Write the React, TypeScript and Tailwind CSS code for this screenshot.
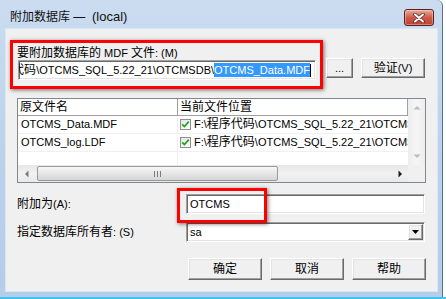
import React from "react";

const CJK = /([\u2e80-\u9fff\uff00-\uffef]+)/;

// CJK runs render at 12px, latin at 11px (like the dialog font)
const Txt = ({ s }: { s: string }) => (
  <>
    {s.split(CJK).map((part, i) =>
      i % 2 === 1 ? (
        <span key={i} className="text-[12px]">
          {part}
        </span>
      ) : (
        <span key={i}>{part}</span>
      )
    )}
  </>
);

const sunken =
  "bg-white border border-t-[#a0a0a0] border-l-[#a0a0a0] border-b-white border-r-white shadow-[inset_1px_1px_0_#696969,inset_-1px_-1px_0_#e3e3e3]";
const raised =
  "bg-[#f0f0f0] border border-t-white border-l-white border-b-[#696969] border-r-[#696969] shadow-[inset_-1px_-1px_0_#a0a0a0,inset_1px_1px_0_#e3e3e3] flex items-center justify-center leading-none";

const CheckBox = () => (
  <div className="w-[11px] h-[11px] shrink-0 border border-[#8e8f8f] bg-gradient-to-br from-[#e6e6e6] to-white flex items-center justify-center">
    <svg width="9" height="9" viewBox="0 0 9 9">
      <path d="M1.2 4.3 L3.4 6.6 L7.8 1.6" fill="none" stroke="#21a121" strokeWidth="1.7" />
    </svg>
  </div>
);

const Arrow = ({ dir, color }: { dir: "up" | "down" | "left" | "right"; color: string }) => {
  const d = {
    up: "M0.5 4.5 L4 1 L7.5 4.5 Z",
    down: "M0.5 1.5 L4 5 L7.5 1.5 Z",
    left: "M4.5 0.5 L1 4 L4.5 7.5 Z",
    right: "M1.5 0.5 L5 4 L1.5 7.5 Z",
  }[dir];
  const vertical = dir === "up" || dir === "down";
  return (
    <svg width={vertical ? 8 : 6} height={vertical ? 6 : 8} viewBox={vertical ? "0 0 8 6" : "0 0 6 8"}>
      <path d={d} fill={color} />
    </svg>
  );
};

const files = [{ name: "OTCMS_Data.MDF" }, { name: "OTCMS_log.LDF" }];

const App = () => {
  return (
    <div className="w-[446px] h-[299px] bg-white overflow-hidden font-['Liberation_Sans','Noto_Sans_CJK_SC',sans-serif] text-[11px] text-black">
      {/* window */}
      <div className="w-[443px] h-[297px] border-r border-[#55708f] rounded-tr-[6px] bg-gradient-to-b from-[#cbdcf0] via-[#bcd2eb] to-[#b5cde8] flex flex-col">
        {/* title bar */}
        <div className="h-[29px] flex items-start shrink-0">
          <div className="pl-[10px] pt-[9px] leading-[16px] text-[12px] text-[#111] flex-1 whitespace-pre">
            附加数据库 —  <span className="text-[13px]">(local)</span>
          </div>
          <div className="mt-[9px] mr-[8px] w-[30px] h-[17px] rounded-[3px] border border-[#5a2020] bg-gradient-to-b from-[#e9a99c] via-[#cf5a49] to-[#c0412f] shadow-[inset_0_0_0_1px_rgba(255,255,255,0.35)] flex items-center justify-center">
            <svg width="12" height="10" viewBox="0 0 12 10">
              <path d="M2 1.5 L10 8.5 M10 1.5 L2 8.5" stroke="#5b2a2a" strokeWidth="3.6" strokeLinecap="round" />
              <path d="M2 1.5 L10 8.5 M10 1.5 L2 8.5" stroke="#ffffff" strokeWidth="2" strokeLinecap="round" />
            </svg>
          </div>
        </div>

        {/* client area */}
        <div className="ml-[6px] w-[431px] h-[262px] bg-[#f0f0f0] shadow-[0_0_0_1px_#d9e6f4] flex flex-col">
          {/* MDF file row */}
          <div className="flex items-start pt-[11px] pl-[4px]">
            <div className="w-[313px] h-[49px] border-[3px] border-[#ff0000] shadow-[1px_1px_4px_rgba(0,0,0,0.55)] pt-[3px] pl-[4px]">
              <div className="h-[14px] leading-[14px] whitespace-nowrap">
                <Txt s="要附加数据库的 MDF 文件: (M)" />
              </div>
              <div className={`${sunken} ml-[1px] w-[298px] h-[20px] flex items-center justify-end overflow-hidden pr-[4px]`}>
                <span className="shrink-0 whitespace-nowrap leading-[14px]">
                  <Txt s="F:\程序代码\OTCMS_SQL_5.22_21\OTCMSDB\" />
                </span>
                <span className="shrink-0 whitespace-nowrap leading-[14px] bg-[#3399ff] text-white">OTCMS_Data.MDF</span>
                <span className="shrink-0 w-px h-[13px] bg-black" />
              </div>
            </div>
            <button className={`${raised} mt-[18px] ml-[3px] w-[27px] h-[20px]`}>...</button>
            <button className={`${raised} mt-[18px] ml-[8px] w-[64px] h-[20px]`}>
              <Txt s="验证(V)" />
            </button>
          </div>

          {/* file list */}
          <div className="mt-[9px] ml-[11px] w-[409px] h-[85px] border border-[#828790] bg-white flex">
            <div className="w-[390px] flex flex-col">
              <div className="h-[17px] flex border-b border-[#a0a0a0] leading-[16px]">
                <div className="w-[160px] border-r border-[#a0a0a0] pl-[2px]">
                  <Txt s="原文件名" />
                </div>
                <div className="w-[230px] border-r border-[#a0a0a0] pl-[2px] whitespace-nowrap">
                  <Txt s="当前文件位置" />
                </div>
              </div>
              {files.map((f) => (
                <div key={f.name} className="h-[18px] flex border-b border-[#f0f0f0] leading-[17px]">
                  <div className="w-[160px] shrink-0 border-r border-[#f0f0f0] pl-[3px]">{f.name}</div>
                  <div className="flex-1 flex items-center gap-[3px] pl-[2px] overflow-hidden whitespace-nowrap">
                    <CheckBox />
                    <span className="shrink-0">
                      <Txt s="F:\程序代码\OTCMS_SQL_5.22_21\OTCMS" />
                    </span>
                  </div>
                </div>
              ))}
              <div className="h-[13px] flex">
                <div className="w-[160px] border-r border-[#f0f0f0]" />
              </div>
              {/* horizontal scrollbar */}
              <div className="h-[17px] bg-gradient-to-b from-[#e6e6e6] via-[#f2f2f2] to-[#e9e9e9] flex items-center">
                <div className="w-[17px] h-[17px] flex items-center justify-center">
                  <Arrow dir="left" color="#7a7a7a" />
                </div>
                <div className="ml-[2px] w-[241px] h-[15px] rounded-[2px] border border-[#9a9a9a] bg-gradient-to-b from-[#f6f6f6] via-[#e6e6e6] to-[#d6d6d6] flex items-center justify-center gap-[2px]">
                  <span className="w-px h-[6px] bg-[#7c7c7c]" />
                  <span className="w-px h-[6px] bg-[#7c7c7c]" />
                  <span className="w-px h-[6px] bg-[#7c7c7c]" />
                </div>
                <div className="flex-1" />
                <div className="w-[17px] h-[17px] flex items-center justify-center">
                  <Arrow dir="right" color="#1a1a1a" />
                </div>
              </div>
            </div>
            {/* vertical scrollbar + corner */}
            <div className="w-[17px] flex flex-col">
              <div className="h-[66px] bg-gradient-to-r from-[#ececec] via-[#f6f6f6] to-[#ececec] flex flex-col items-center justify-between pt-[6px] pb-[6px]">
                <Arrow dir="up" color="#bcbcbc" />
                <Arrow dir="down" color="#bcbcbc" />
              </div>
              <div className="h-[17px] bg-[#f0f0f0]" />
            </div>
          </div>

          {/* attach as */}
          <div className="mt-[11px] flex items-center">
            <div className="w-[180px] pl-[11px] leading-[14px]">
              <Txt s="附加为(A):" />
            </div>
            <div className={`${sunken} relative w-[239px] h-[20px] flex items-center pl-[3px]`}>
              OTCMS
              <div className="absolute left-[-10px] top-[-7px] w-[90px] h-[35px] border-[3px] border-[#ff0000] shadow-[1px_1px_4px_rgba(0,0,0,0.55)]" />
            </div>
          </div>

          {/* owner */}
          <div className="mt-[8px] flex items-center">
            <div className="w-[180px] pl-[11px] leading-[14px] whitespace-nowrap">
              <Txt s="指定数据库所有者: (S)" />
            </div>
            <div className={`${sunken} w-[239px] h-[20px] flex items-center pl-[3px] pr-px`}>
              <span className="flex-1">sa</span>
              <div className={`${raised} w-[15px] h-[16px]`}>
                <svg width="7" height="4" viewBox="0 0 7 4">
                  <path d="M0 0 L7 0 L3.5 4 Z" fill="#000" />
                </svg>
              </div>
            </div>
          </div>

          {/* dialog buttons */}
          <div className="mt-[16px] flex justify-end gap-[8px] pr-[11px]">
            <button className={`${raised} w-[74px] h-[22px]`}>
              <Txt s="确定" />
            </button>
            <button className={`${raised} w-[74px] h-[22px]`}>
              <Txt s="取消" />
            </button>
            <button className={`${raised} w-[74px] h-[22px]`}>
              <Txt s="帮助" />
            </button>
          </div>
        </div>
      </div>
      <div className="h-[2px] bg-[#3cc6ea]" />
    </div>
  );
};

export default App;
